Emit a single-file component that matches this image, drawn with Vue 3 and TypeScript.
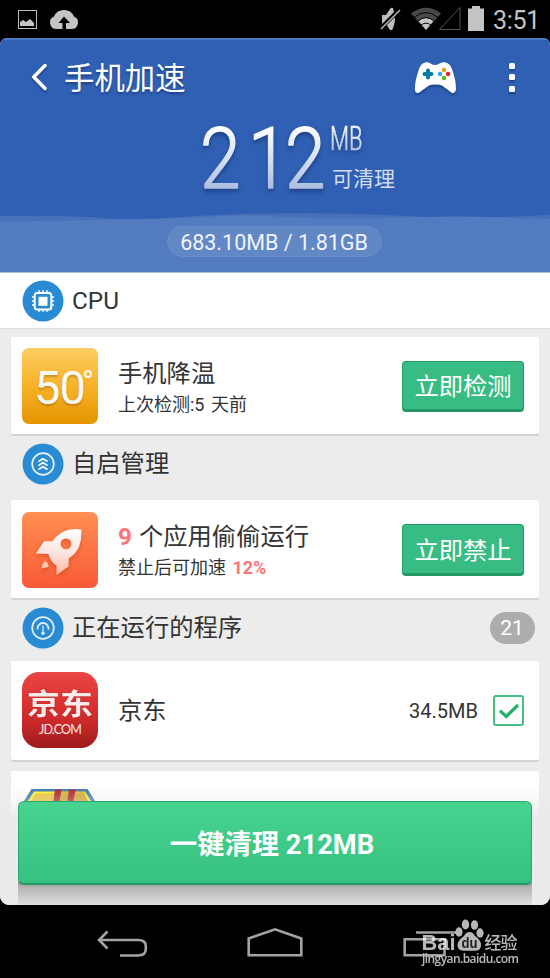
<script setup lang="ts">
import { ref } from 'vue'

interface RunningApp {
  name: string
  size: string
  checked: boolean
}

const cleanable = ref<number>(212)
const blockedCount = ref<number>(9)
const running = ref<RunningApp>({ name: '京东', size: '34.5MB', checked: true })
const runningTotal = ref<number>(21)

function toggle(): void {
  running.value.checked = !running.value.checked
}
</script>

<template>
  <div class="phone">
    <div class="status">
      <svg class="st-left" width="80" height="38" viewBox="0 0 80 38">
        <rect x="18.500" y="10.500" width="18" height="18" fill="none" stroke="#bdbdbd" />
        <path d="M20 26V22L23 20L26 22L30 19L34 23V26Z" fill="#c4c4c4" />
        <path d="M56.500 29A6.500 6.500 0 0 1 54 16.500A11 11 0 0 1 74 16.500A6.500 6.500 0 0 1 71.500 29H66V23H70L64 16.500L58.500 23H62.500V29Z" fill="#c4c4c4" />
      </svg>
      <div class="st-right">
        <svg width="110" height="38" viewBox="375 0 110 38">
          <path d="M382 15H386L390 9Q391 7 393 8Q395 14 395 20Q394 27 392 30L390 30L386 24H382Z" fill="#bdbdbd" />
          <path d="M380 29L399 10" stroke="#000" stroke-width="4" />
          <path d="M381 29L400 10" stroke="#bdbdbd" stroke-width="1.500" />
          <path d="M411 13.500Q426 2 441 13.500L426 30Z" fill="#494949" />
          <path d="M418.500 21Q426 14.500 433.500 21L426 30Z" fill="#c6c6c6" />
          <path d="M414 17.500Q426 7.500 438 17.500M417.500 21.300Q426 14 434.500 21.300" fill="none" stroke="#000" stroke-width="1" />
          <path d="M421 25.200Q426 21 431 25.200" fill="none" stroke="#000" stroke-width="1" />
          <path d="M439.500 29.500H460V7.500Z" fill="none" stroke="#555" />
          <path d="M468 8.500H472V6H480V8.500H484V31H468Z" fill="#c4c4c4" />
        </svg>
        <span class="time">3:51</span>
      </div>
    </div>

    <div class="app">
      <header class="header">
        <svg class="waves" width="550" height="60" viewBox="0 212 550 60">
          <path d="M0 216Q50 215 88 217Q130 221 180 217Q250 213 310 213.300Q370 214 425 217Q480 218.500 550 215V272H0Z" fill="#4971b9" />
          <path d="M0 221.500Q55 221 110 219.500Q170 219 205 217Q240 214.500 275 216.500Q325 219.500 375 218.500Q450 215 500 217.500Q525 219 550 219V272H0Z" fill="#537bc0" />
        </svg>
        <div class="toolbar">
          <svg class="back" width="20" height="32" viewBox="0 0 20 32">
            <path d="M16 4.500L4.800 16L16 27.500" fill="none" stroke="#fff" stroke-width="3.500" stroke-linecap="round" stroke-linejoin="round" />
          </svg>
          <h1 class="title">手机加速</h1>
          <svg class="pad" width="44" height="36" viewBox="413 59 44 36">
            <path d="M426 61.300Q428.500 60.800 431 62.800Q435 65.300 439 62.800Q441.500 60.800 444.500 61.300Q450 62 452 68Q456 79 456 88Q455.500 92.500 452 92L442 84.500Q440 83.500 435.500 83.500Q431 83.500 429 84.500L418.500 92Q415 92.500 414.800 88Q415 79 419 68Q421 62 426 61.300Z" fill="#fff" />
            <path d="M424.500 73H431.500M428 69.500V76.500" stroke="#087ca4" stroke-width="4" stroke-linecap="round" />
            <circle cx="444" cy="69" r="2.200" fill="#f89a1c" />
            <circle cx="448" cy="73" r="2.200" fill="#ed202b" />
            <circle cx="444" cy="77" r="2.200" fill="#66b60d" />
            <circle cx="440" cy="73" r="2.200" fill="#33a2f5" />
          </svg>
          <div class="more"><i></i><i></i><i></i></div>
        </div>

        <div class="hero">
          <svg class="digits" width="132" height="84" viewBox="196 116 132 84">
            <defs>
              <linearGradient id="silver" x1="0" y1="126" x2="0" y2="190" gradientUnits="userSpaceOnUse">
                <stop offset="0" stop-color="#fff" />
                <stop offset=".45" stop-color="#dce3f2" />
                <stop offset="1" stop-color="#abbce0" />
              </linearGradient>
            </defs>
            <text transform="translate(196 0) scale(.86 1)" x="4.600 60.500 103.500" y="188" font-size="85" fill="url(#silver)" stroke="url(#silver)">{{ cleanable }}</text>
          </svg>
          <div class="unit">
            <svg class="mb" width="36" height="34" viewBox="328 121 36 34">
              <defs>
                <linearGradient id="silver2" x1="0" y1="126" x2="0" y2="150" gradientUnits="userSpaceOnUse">
                  <stop offset="0" stop-color="#f5f7fc" />
                  <stop offset="1" stop-color="#b6c5e4" />
                </linearGradient>
              </defs>
              <text x="330" y="149.500" font-size="33" textLength="32.500" lengthAdjust="spacingAndGlyphs" fill="url(#silver2)" stroke="url(#silver2)">MB</text>
            </svg>
            <span class="can">可清理</span>
          </div>
        </div>
        <div class="pill">683.10MB / 1.81GB</div>
      </header>

      <main class="content">
        <section class="sec first">
          <svg class="badge" width="42" height="42" viewBox="0 0 42 42">
            <circle cx="21" cy="21" r="20.500" fill="#288bd3" />
            <rect x="12.700" y="13" width="16.600" height="16.600" rx="2.500" fill="none" stroke="#fff" stroke-width="2" />
            <rect x="16.500" y="16.800" width="9" height="9" fill="#fff" />
            <path d="M17 10V13M21 10V13M25 10V13M17 29.500V32M21 29.500V32M25 29.500V32M10 17H13M10 21H13M10 25H13M29 17H32M29 21H32M29 25H32" stroke="#fff" stroke-width="1.300" />
          </svg>
          <h2>CPU</h2>
        </section>

        <article class="card c1">
          <div class="tile yellow"><span class="fifty">50</span><i class="deg"></i></div>
          <div class="info">
            <p class="big">手机降温</p>
            <p class="small">上次检测:5 天前</p>
          </div>
          <button class="act">立即检测</button>
        </article>

        <section class="sec s2">
          <svg class="badge" width="42" height="42" viewBox="0 0 42 42">
            <circle cx="21" cy="21" r="20.500" fill="#288bd3" />
            <circle cx="21" cy="21" r="10.800" fill="none" stroke="#e8f2fa" stroke-width="1.700" />
            <path d="M16.500 18.500L21 15.800L25.500 18.500M16.500 22.500L21 19.800L25.500 22.500M16.500 26.500L21 23.800L25.500 26.500" fill="none" stroke="#fff" stroke-width="1.700" />
          </svg>
          <h2>自启管理</h2>
        </section>

        <article class="card c2">
          <div class="tile orange">
            <svg width="76" height="76" viewBox="22 512 76 76">
              <defs>
                <linearGradient id="rk" x1="0" y1="0" x2="0" y2="1">
                  <stop offset="0" stop-color="#fff" />
                  <stop offset=".55" stop-color="#fce2dc" />
                  <stop offset="1" stop-color="#ffb8a2" />
                </linearGradient>
              </defs>
              <path fill="url(#rk)" fill-rule="evenodd" d="M81.300 529.500Q82 539 79 547Q76 554 68.700 558.500L68.500 566.500L56.500 575V565.500Q51 563 48.500 554L36 553.500L44 541.200H52.500Q59 531.500 70 529.500Q76 528.500 81.300 529.500ZM66 538.500A5.400 5.400 0 1 0 66 549.300A5.400 5.400 0 1 0 66 538.500Z" />
              <path d="M45.500 561Q49 564 48.500 567L41.500 568.500Q42 563 45.500 561Z" fill="#ffc7b6" />
            </svg>
          </div>
          <div class="info">
            <p class="big"><b>{{ blockedCount }}</b> 个应用偷偷运行</p>
            <p class="small">禁止后可加速 <b>12%</b></p>
          </div>
          <button class="act">立即禁止</button>
        </article>

        <section class="sec s3">
          <svg class="badge" width="42" height="42" viewBox="0 0 42 42">
            <circle cx="21" cy="21" r="20.500" fill="#288bd3" />
            <circle cx="21" cy="21" r="10.800" fill="none" stroke="#e0eef9" stroke-width="1.700" />
            <path d="M15.500 22.500V21.500A5.500 5.500 0 0 1 26.500 21.500V22.500" fill="none" stroke="#e0eef9" stroke-width="1.800" />
            <path d="M21 18.500V26" stroke="#e0eef9" stroke-width="1.200" />
            <circle cx="21" cy="26.300" r="1.700" fill="#e0eef9" />
          </svg>
          <h2>正在运行的程序</h2>
          <span class="count">{{ runningTotal }}</span>
        </section>

        <article class="card c3">
          <div class="tile jd">
            <span class="jd-cn">京东</span>
            <span class="jd-en">JD.COM</span>
          </div>
          <p class="name">{{ running.name }}</p>
          <span class="size">{{ running.size }}</span>
          <div class="check" @click="toggle">
            <svg v-if="running.checked" width="28" height="28" viewBox="0 0 28 28">
              <path d="M5 13.800L11.300 19.500L23 8" fill="none" stroke="#22b169" stroke-width="3.200" />
            </svg>
          </div>
        </article>

        <article class="card c4">
          <svg width="76" height="40" viewBox="22 787 76 40">
            <path d="M31.500 789H87.500L97 804V827H22V804Z" fill="#2f70ad" />
            <path d="M34 791.500H85L93 804V827H26V804Z" fill="#ffed1c" />
            <path d="M36 793.500H83.500L90 804V827H29V804Z" fill="#e8bf2e" />
            <path d="M59 791H84L89 804H59Z" fill="#a87a22" opacity=".45" />
            <path d="M55 789.500H61.500L59 804H53Z M69 789.500H75.500L73 804H67Z" fill="#ab1420" />
          </svg>
        </article>
      </main>

      <div class="glow"></div>
      <div class="drop"></div>
      <button class="clean"><span>一键清理 {{ cleanable }}MB</span></button>
    </div>

    <nav class="nav">
      <svg width="550" height="73" viewBox="0 905 550 73">
        <g fill="none" stroke="#a3a3a3" stroke-width="2.600">
          <path d="M107.500 931.500L99 940L107.500 948.500M99 940H138Q145.800 940 145.800 946V949Q145.800 955.500 138 955.500H120" />
          <path d="M248.700 955.300H301.300V938.500L275 929.300L248.700 938.500Z" />
          <path d="M404.700 939.300H444.500V955.300H404.700ZM416 932.500H456" />
        </g>
      </svg>
      <div class="mark">
        <svg width="106" height="54" viewBox="416 914 106 54" fill="#fff">
          <ellipse cx="465.500" cy="924.500" rx="3.700" ry="5" />
          <ellipse cx="474.500" cy="925" rx="3.600" ry="4.800" />
          <ellipse cx="459" cy="932" rx="3.600" ry="4.700" />
          <ellipse cx="480" cy="933" rx="3.600" ry="4.700" />
          <path d="M469.500 932Q473 932 475 936Q481 940 481 945Q481 951 475 950.700H464Q457.500 951 457.500 945Q458 940 464 936Q466 932 469.500 932Z" />
          <text class="bai" x="421.500" y="950" font-size="21.500" textLength="34" lengthAdjust="spacingAndGlyphs">Bai</text>
          <text class="bai" x="461.500" y="948" font-size="14" fill="#2c2c2c" textLength="16" lengthAdjust="spacingAndGlyphs">du</text>
          <text x="484.500" y="949" font-size="17" font-weight="500" textLength="33">经验</text>
          <text class="url" x="422" y="963" font-size="12" textLength="97">jingyan.baidu.com</text>
        </svg>
      </div>
    </nav>
  </div>
</template>

<style>
body {
  margin: 0;
  background: #000;
}
</style>

<style scoped>
* {
  box-sizing: border-box;
}
.phone {
  width: 550px;
  height: 978px;
  overflow: hidden;
  background: #000;
  color: #333;
  font-family: Roboto, 'Noto Sans CJK SC', sans-serif;
  display: flex;
  flex-direction: column;
}
svg {
  display: block;
  flex: none;
  overflow: visible;
}
h1, h2, p {
  margin: 0;
  font-weight: 400;
}
.status {
  height: 38px;
  display: flex;
  justify-content: space-between;
}
.st-right {
  display: flex;
}
.time {
  width: 65px;
  padding-left: 8px;
  font-size: 25px;
  line-height: 41px;
  letter-spacing: -0.3px;
  color: #c4c4c4;
}
.app {
  position: relative;
  height: 867px;
  overflow: hidden;
  border-radius: 7px 7px 9px 9px;
  background: #ececec;
  display: flex;
  flex-direction: column;
}
.header {
  position: relative;
  flex: none;
  height: 235px;
  background: #3060b4;
  border-top: 2px solid #4b78c4;
  border-bottom: 1px solid #a9bddf;
  display: flex;
  flex-direction: column;
  align-items: center;
}
.waves {
  position: absolute;
  left: 0;
  bottom: 0;
}
.toolbar {
  width: 100%;
  height: 76px;
  padding-left: 29px;
  padding-right: 35px;
  display: flex;
  align-items: center;
}
.back, .pad {
  filter: drop-shadow(0 2px 1px rgba(0, 20, 70, 0.4));
}
.back {
  margin-bottom: 3px;
}
.title {
  flex: 1;
  margin-left: 15px;
  padding-top: 2px;
  font-size: 30.4px;
  line-height: 40px;
  color: #fff;
  text-shadow: 0 2px 2px rgba(0, 20, 70, 0.4);
}
.pad {
  margin-right: 52px;
  margin-bottom: 1px;
}
.more {
  display: flex;
  flex-direction: column;
  gap: 5.5px;
  margin-bottom: 2px;
}
.more i {
  width: 6px;
  height: 6px;
  border-radius: 1.5px;
  background: #fff;
  box-shadow: 0 2px 2px rgba(0, 20, 70, 0.4);
}
.hero {
  width: 100%;
  height: 110px;
  padding-left: 196px;
  display: flex;
}
.digits text {
  font-family: Roboto, sans-serif;
  font-weight: 300;
  stroke-width: 1.5px;
  stroke-linejoin: round;
}
.digits, .mb {
  filter: drop-shadow(0 3px 2px rgba(10, 35, 95, 0.5));
}
.unit {
  padding-top: 5px;
  display: flex;
  flex-direction: column;
}
.mb text {
  font-weight: 300;
  stroke-width: 0.7px;
}
.can {
  margin-left: 4px;
  font-size: 21px;
  line-height: 30px;
  margin-top: 9px;
  color: #d3dcef;
}
.pill {
  position: relative;
  width: 215px;
  height: 31px;
  margin-right: 1px;
  padding-right: 1px;
  border-radius: 16px;
  background: #6287c5;
  border: 1px solid #6b8eca;
  font-size: 21.5px;
  line-height: 32px;
  text-align: center;
  color: #f0f4fb;
}
.content {
  flex: none;
  display: flex;
  flex-direction: column;
}
.sec {
  flex: none;
  height: 66px;
  padding: 0 15px 0 22px;
  display: flex;
  align-items: center;
}
.first {
  height: 56px;
  background: #fff;
  border-bottom: 1px solid #dcdcdc;
  margin-bottom: 8px;
}
.sec h2 {
  flex: 1;
  margin-left: 8px;
  font-size: 24.3px;
  line-height: 34px;
}
.s2 {
  padding-bottom: 6px;
}
.s3 {
  height: 63px;
  padding-bottom: 3px;
}
.count {
  width: 45px;
  height: 32px;
  border-radius: 16px;
  background: #adadad;
  color: #fff;
  font-size: 21px;
  line-height: 33px;
  padding-right: 1px;
  text-align: center;
}
.card {
  flex: none;
  width: 528px;
  margin-left: 11px;
  height: 97px;
  padding: 0 15px 0 11px;
  background: #fff;
  border-radius: 2px;
  box-shadow: 0 2px 0 #d4d4d4;
  display: flex;
  align-items: center;
}
.c2 {
  height: 98px;
}
.c3 {
  height: 99px;
}
.c4 {
  height: 140px;
  margin-top: 11px;
  align-items: flex-start;
  padding-top: 16px;
}
.tile {
  flex: none;
  width: 76px;
  height: 76px;
  border-radius: 7px;
}
.yellow {
  display: flex;
  background: linear-gradient(#fbcd61, #f8b228 50%, #e59400);
  padding: 14px 0 0 12px;
}
.fifty {
  font-size: 47px;
  line-height: 52px;
  letter-spacing: -1px;
  color: #f8f8f8;
  font-weight: 400;
  text-shadow: 0 2px 2px rgba(140, 80, 0, 0.4);
}
.deg {
  width: 8px;
  height: 8px;
  margin: 8px 0 0 -1px;
  border: 2px solid #f8f8f8;
  border-radius: 50%;
}
.orange {
  margin-top: 1px;
  background: linear-gradient(#ff8f52, #f85a37);
}
.orange svg path {
  filter: drop-shadow(0 2px 2px rgba(180, 40, 10, 0.4));
}
.jd {
  border-radius: 17px;
  margin-bottom: 2px;
  background: linear-gradient(#e94745, #d9302f 45%, #c62829 70%, #9c1c1c);
  display: flex;
  flex-direction: column;
  align-items: center;
  color: #fbeaea;
}
.jd-cn {
  margin-top: 15px;
  font-size: 33px;
  font-weight: 700;
  line-height: 35px;
  transform: scaleY(0.88);
  text-shadow: 0 1px 1px #901919;
}
.jd-en {
  font-family: Lato, sans-serif;
  font-size: 12.5px;
  line-height: 15px;
  letter-spacing: -0.8px;
}
.info {
  flex: 1;
  margin-left: 20px;
  padding-top: 5px;
}
.c2 .info {
  padding-top: 4px;
}
.big {
  font-size: 24.3px;
  line-height: 34px;
  white-space: pre;
  word-spacing: 1px;
}
.small {
  font-size: 18px;
  line-height: 28px;
  word-spacing: 2px;
}
.info b {
  color: #ff7478;
  font-weight: 700;
}
.act {
  width: 122px;
  height: 51px;
  margin-top: 2px;
  padding: 3px 0 0;
  border: 1px solid #219c66;
  border-bottom: 3px solid #249765;
  border-radius: 4px;
  background: #39bc83;
  font-family: inherit;
  font-size: 24.3px;
  line-height: 44px;
  color: #fff;
}
.c2 .act {
  height: 52px;
}
.name {
  flex: 1;
  margin-left: 20px;
  padding-bottom: 4px;
  font-size: 24.3px;
}
.size {
  margin-right: 15px;
  font-size: 20px;
}
.check {
  width: 31px;
  height: 31px;
  border: 2px solid #45be83;
  border-radius: 3px;
  display: flex;
  align-items: center;
  justify-content: center;
}
.glow {
  position: absolute;
  inset: 745px 0 0 0;
  background: linear-gradient(rgba(235, 235, 235, 0), rgba(235, 235, 235, 0.35) 18px, #ebebeb 36px);
}
.drop {
  position: absolute;
  left: 18px;
  top: 843px;
  width: 514px;
  height: 24px;
  background: linear-gradient(#8f8f8f, #b8b8b8 30%, #dedede);
}
.clean {
  position: absolute;
  left: 18px;
  top: 763px;
  width: 514px;
  height: 84px;
  padding: 4px 6px 0 0;
  border: 1px solid #2ba871;
  border-bottom: 2px solid #249a63;
  border-radius: 6px;
  background: linear-gradient(#47d38f, #37c182);
  font-family: inherit;
  font-size: 27.3px;
  font-weight: 700;
  line-height: 76px;
  color: #fff;
}
.nav {
  position: relative;
  height: 73px;
}
.mark {
  position: absolute;
  left: 416px;
  top: 9px;
  opacity: 0.72;
}
.mark text {
  font-family: 'Open Sans', 'Noto Sans CJK SC', sans-serif;
}
.mark .bai {
  font-family: 'Liberation Sans', sans-serif;
  font-weight: 700;
}
.mark .url {
  font-weight: 600;
}
</style>
